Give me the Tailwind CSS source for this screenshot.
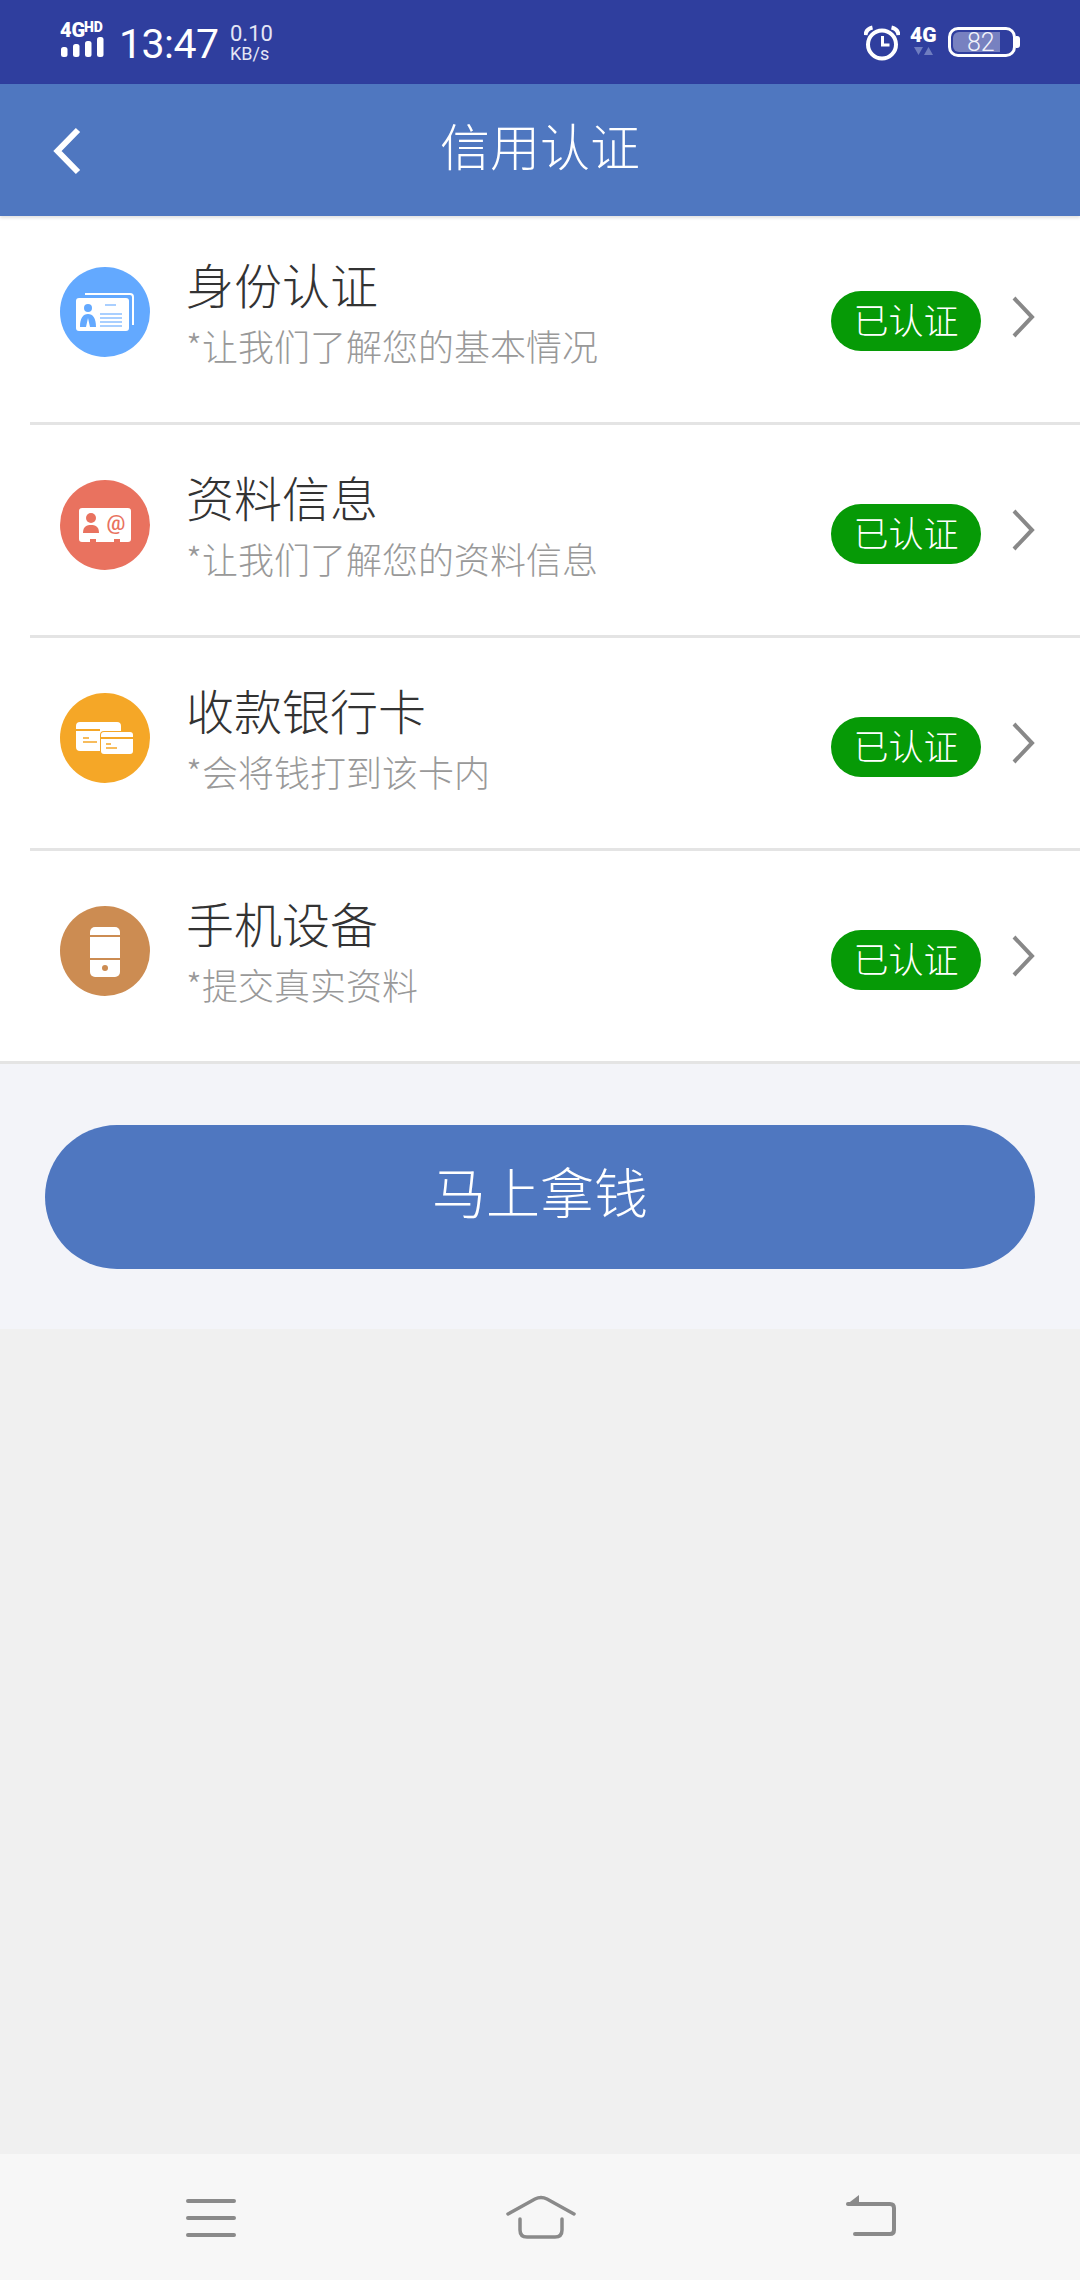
<!DOCTYPE html>
<html lang="zh-CN">
<head>
  <meta charset="UTF-8" />
  <meta name="viewport" content="width=device-width, initial-scale=1.0"/>
  <title>信用认证</title>
  <script src="https://cdn.jsdelivr.net/npm/@tailwindcss/browser@4"></script>
</head>
<body class="bg-[#f0f0f0] font-['Roboto','Noto_Sans_CJK_SC',sans-serif]">
<div class="w-[1080px] h-[2280px] flex flex-col overflow-hidden">

  <!-- Status bar -->
  <div class="h-[84px] bg-[#2f3e9e] flex items-start text-white shrink-0">
    <svg class="ml-[60px] mt-[14px] shrink-0" width="46" height="44" viewBox="0 -6 46 44">
      <text x="0" y="17" font-family="Roboto" font-weight="900" font-size="20" fill="#fff">4G</text>
      <text x="24" y="12" font-family="Roboto" font-weight="900" font-size="14" fill="#fff">HD</text>
      <rect x="1" y="27" width="6.5" height="10" rx="2.5" fill="#fff"/>
      <rect x="13" y="24" width="6.5" height="13" rx="2.5" fill="#fff"/>
      <rect x="25" y="21" width="6.5" height="16" rx="2.5" fill="#fff"/>
      <rect x="37" y="17" width="6.5" height="20" rx="2.5" fill="#fff"/>
    </svg>
    <div class="ml-[13px] mt-[21px] text-[41px] leading-[46px] w-[111px] tracking-[-0.5px]">13:47</div>
    <div class="mt-[24px] flex flex-col text-[#e4e6f5]">
      <span class="text-[22px] leading-[20px]">0.10</span>
      <span class="text-[18px] leading-[19px]">KB/s</span>
    </div>
    <div class="flex-1"></div>
    <svg class="mt-[25px] shrink-0" width="36" height="36" viewBox="0 0 36 36" fill="none" stroke="#fff">
      <circle cx="18" cy="19.5" r="14" stroke-width="4"/>
      <path d="M18.5 11v9h7" stroke-width="3"/>
      <path d="M1.5 10Q2 4 8.5 2.5" stroke-width="4"/>
      <path d="M34.5 10Q34 4 27.5 2.5" stroke-width="4"/>
    </svg>
    <svg class="ml-[10px] mt-[19px] shrink-0" width="28" height="38" viewBox="0 -6 28 38">
      <text x="0" y="17" font-family="Roboto" font-weight="900" font-size="21" fill="#fff">4G</text>
      <path d="M4 22h9l-4.5 8z" fill="#6f7dc0"/>
      <path d="M14 30h9l-4.5-8z" fill="#6f7dc0"/>
    </svg>
    <div class="ml-[10px] mt-[27px] relative w-[68px] h-[30px] rounded-[10px] border-[3px] border-white shrink-0 flex items-center">
      <div class="absolute left-[2px] top-[2px] w-[47px] h-[20px] rounded-l-[6px] bg-white/35"></div>
      <span class="relative ml-[16px] text-[25px] leading-none text-[#f2f3fb] font-light">82</span>
    </div>
    <div class="mt-[36px] w-[4px] h-[12px] bg-white rounded-r-[3px] shrink-0"></div>
    <div class="w-[60px] shrink-0"></div>
  </div>

  <!-- Title bar -->
  <div class="relative z-10 h-[132px] bg-[#4f77c0] flex items-center justify-center shrink-0 shadow-[0_2px_3px_rgba(0,0,0,0.12)]">
    <svg class="absolute left-[50px] top-[42px]" width="34" height="50" viewBox="0 0 34 50" fill="none" stroke="#fff" stroke-width="6">
      <path d="M28 4 7.5 25 28 46"/>
    </svg>
    <span class="-mt-[13px] text-white text-[50px] leading-none font-['Noto_Sans_CJK_SC'] font-light">信用认证</span>
  </div>

  <!-- Items -->
  <div class="bg-white shrink-0 font-['Noto_Sans_CJK_SC',sans-serif]">

    <div class="ml-[30px] h-[209px] border-b-[3px] border-[#e4e4e4] flex items-start">
      <div class="mt-[51px] ml-[30px] w-[90px] h-[90px] rounded-full bg-[#63a9ff] shrink-0">
        <svg width="90" height="90" viewBox="0 0 90 90" fill="none">
          <path d="M25 27h45a3 3 0 0 1 3 3v28" stroke="#fff" stroke-width="2"/>
          <rect x="16" y="31" width="53" height="33" rx="3" fill="#fff"/>
          <circle cx="28" cy="41" r="4" fill="#63a9ff"/>
          <path d="M20 60c0-9 3-13 8-13s8 4 8 13h-6l-2-9-2 9z" fill="#63a9ff"/>
          <path d="M45 38h11M40 47h22M40 51h22M40 55h22M40 59h22" stroke="#a9cfff" stroke-width="2"/>
        </svg>
      </div>
      <div class="ml-[36px] w-[645px] shrink-0">
        <div class="mt-[37px] text-[48px] leading-[60px] text-[#333] font-light">身份认证</div>
        <div class="mt-[9px] text-[36px] leading-[46px] text-[#999] font-light">*让我们了解您的基本情况</div>
      </div>
      <div class="mt-[75px] w-[150px] h-[60px] rounded-full bg-[#069a06] text-white text-[35px] leading-[56px] text-center shrink-0 font-light">已认证</div>
      <svg class="mt-[79px] ml-[30px] shrink-0" width="24" height="44" viewBox="0 0 24 44" fill="none" stroke="#888" stroke-width="4">
        <path d="M3 3 21 22 3 41"/>
      </svg>
    </div>

    <div class="ml-[30px] h-[213px] border-b-[3px] border-[#e4e4e4] flex items-start">
      <div class="mt-[55px] ml-[30px] w-[90px] h-[90px] rounded-full bg-[#e9725f] shrink-0">
        <svg width="90" height="90" viewBox="0 0 90 90" fill="none">
          <path d="M22 28h46a3 3 0 0 1 3 3v28a3 3 0 0 1-3 3h-8v-3h-6v3H36v-3h-6v3h-8a3 3 0 0 1-3-3V31a3 3 0 0 1 3-3z" fill="#fff"/>
          <circle cx="31" cy="38" r="5" fill="#e9725f"/>
          <path d="M23 53c0-7 4-8 8-8s8 1 8 8z" fill="#e9725f"/>
          <text x="56" y="50" text-anchor="middle" font-family="Roboto" font-weight="500" font-size="21" fill="#e9725f">@</text>
        </svg>
      </div>
      <div class="ml-[36px] w-[645px] shrink-0">
        <div class="mt-[41px] text-[48px] leading-[60px] text-[#333] font-light">资料信息</div>
        <div class="mt-[9px] text-[36px] leading-[46px] text-[#999] font-light">*让我们了解您的资料信息</div>
      </div>
      <div class="mt-[79px] w-[150px] h-[60px] rounded-full bg-[#069a06] text-white text-[35px] leading-[56px] text-center shrink-0 font-light">已认证</div>
      <svg class="mt-[83px] ml-[30px] shrink-0" width="24" height="44" viewBox="0 0 24 44" fill="none" stroke="#888" stroke-width="4">
        <path d="M3 3 21 22 3 41"/>
      </svg>
    </div>

    <div class="ml-[30px] h-[213px] border-b-[3px] border-[#e4e4e4] flex items-start">
      <div class="mt-[55px] ml-[30px] w-[90px] h-[90px] rounded-full bg-[#f5a727] shrink-0">
        <svg width="90" height="90" viewBox="0 0 90 90" fill="none">
          <path d="M20 29h37a4 4 0 0 1 4 4v5H44a4 4 0 0 0-4 4v16H20a4 4 0 0 1-4-4V33a4 4 0 0 1 4-4z" fill="#fff"/>
          <path d="M16 37h24" stroke="#f5a727" stroke-width="2"/>
          <path d="M23 45h6M23 49h14" stroke="#f5a727" stroke-width="1.5"/>
          <rect x="41" y="39" width="32" height="22" rx="3" fill="#fff"/>
          <path d="M41 45h32" stroke="#f5a727" stroke-width="2"/>
          <path d="M46 51h5M46 55h11" stroke="#f5a727" stroke-width="1.5"/>
        </svg>
      </div>
      <div class="ml-[36px] w-[645px] shrink-0">
        <div class="mt-[41px] text-[48px] leading-[60px] text-[#333] font-light">收款银行卡</div>
        <div class="mt-[9px] text-[36px] leading-[46px] text-[#999] font-light">*会将钱打到该卡内</div>
      </div>
      <div class="mt-[79px] w-[150px] h-[60px] rounded-full bg-[#069a06] text-white text-[35px] leading-[56px] text-center shrink-0 font-light">已认证</div>
      <svg class="mt-[83px] ml-[30px] shrink-0" width="24" height="44" viewBox="0 0 24 44" fill="none" stroke="#888" stroke-width="4">
        <path d="M3 3 21 22 3 41"/>
      </svg>
    </div>

    <div class="h-[213px] border-b-[3px] border-[#e4e4e4] flex items-start pl-[30px]">
      <div class="mt-[55px] ml-[30px] w-[90px] h-[90px] rounded-full bg-[#cc8c52] shrink-0">
        <svg width="90" height="90" viewBox="0 0 90 90" fill="none">
          <rect x="30" y="21" width="30" height="50" rx="5" fill="#fff"/>
          <path d="M30 30h30M30 53h30" stroke="#cc8c52" stroke-width="2"/>
          <circle cx="45" cy="62" r="3" fill="#cc8c52"/>
        </svg>
      </div>
      <div class="ml-[36px] w-[645px] shrink-0">
        <div class="mt-[41px] text-[48px] leading-[60px] text-[#333] font-light">手机设备</div>
        <div class="mt-[9px] text-[36px] leading-[46px] text-[#999] font-light">*提交真实资料</div>
      </div>
      <div class="mt-[79px] w-[150px] h-[60px] rounded-full bg-[#069a06] text-white text-[35px] leading-[56px] text-center shrink-0 font-light">已认证</div>
      <svg class="mt-[83px] ml-[30px] shrink-0" width="24" height="44" viewBox="0 0 24 44" fill="none" stroke="#888" stroke-width="4">
        <path d="M3 3 21 22 3 41"/>
      </svg>
    </div>
  </div>

  <!-- Submit -->
  <div class="h-[265px] bg-[#f3f4f9] px-[45px] pt-[61px] shrink-0">
    <button class="w-[990px] h-[144px] rounded-full bg-[#4f77c0] text-white text-[54px] pb-[14px] font-['Noto_Sans_CJK_SC'] font-light">马上拿钱</button>
  </div>

  <div class="flex-1"></div>

  <!-- Navigation bar -->
  <div class="h-[126px] bg-[#f7f7f7] relative shrink-0 flex justify-between pl-[186px] pr-[183px] pt-[44px]">
    <svg width="50" height="40" viewBox="0 0 50 40" fill="none" stroke="#8a8a8a" stroke-width="4" stroke-linecap="round">
      <path d="M2 3h46M2 20h46M2 37h46"/>
    </svg>
    <svg class="-mt-[3px]" width="70" height="44" viewBox="0 0 70 44" fill="none" stroke="#8a8a8a" stroke-width="3.5" stroke-linecap="round">
      <path d="M2 19 29 4q6-3 12 0l27 15"/>
      <path d="M14 24v11q0 7 7 7h28q7 0 7-7V24"/>
    </svg>
    <svg class="-mt-[3px]" width="52" height="43" viewBox="0 0 52 43" fill="none" stroke="#8a8a8a" stroke-width="4" stroke-linecap="round">
      <path d="M3 9h42q4 0 4 4v22q0 4-4 4H10"/>
      <path d="M1 10 14 0v10z" fill="#8a8a8a" stroke="none"/>
    </svg>
  </div>
</div>
</body>
</html>
